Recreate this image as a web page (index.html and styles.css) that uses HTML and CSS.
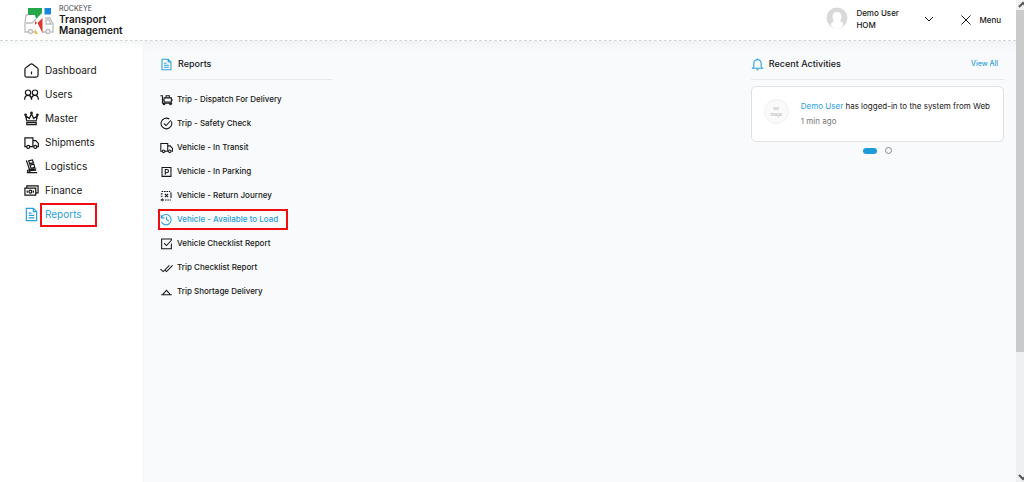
FILE: index.html
```html
<!DOCTYPE html>
<html lang="en">
<head>
<meta charset="utf-8">
<title>Rockeye Transport Management</title>
<meta name="viewport" content="width=device-width, initial-scale=1">
<link rel="stylesheet" href="styles.css">
</head>
<body>
<svg class="sprite" aria-hidden="true">
  <symbol id="truck" viewBox="0 0 16 16"><path d="M3 12.500H1V3h8.500v9.500H6M9.500 6h3L15.300 9v3.500H14M9.500 12.500h.5"/><circle cx="4.500" cy="12.700" r="1.600"/><circle cx="12" cy="12.700" r="1.600"/></symbol>
  <symbol id="report" viewBox="0 0 16 16"><path d="M2.500 1.500h7.500l3.500 3.500v9.500h-11zM10 1.500V5h3.500M5 6.500h3M5 9h6M5 11.500h6"/></symbol>
</svg>
<div class="app">
  <div class="page">
    <header class="header">
      <a class="brand" href="#">
        <svg class="brand-logo" viewBox="0 0 30 28" aria-hidden="true">
          <g fill="none" stroke="#bdbdbd" stroke-width="1.300"><path d="M4 8H2l-1 8v9h4M8 25h4M21 11h5l3 6v8h-2M18 25h4M2 16h6l4-4"/><circle cx="6.500" cy="24.500" r="2"/><circle cx="24" cy="24.500" r="2"/><path d="M22 13h3l2 4h-5z"/></g>
          <path fill="#24a64a" d="M4 1h14v5l-6 6-1-4H4z"/><path fill="#1787dc" d="M20.500 1h6.500v6.500h-6.500z"/><path fill="#de352c" d="M18.500 11v15l-5-10zM11 14l2 2-2 2z"/><path fill="#f2bd3a" d="M11 22l3 5h-3z"/>
        </svg>
        <span class="brand-text"><small>ROCKEYE</small><strong>Transport<br>Management</strong></span>
      </a>
      <div class="header-tools">
        <button class="user" type="button">
          <svg class="avatar" viewBox="0 0 22 22" aria-hidden="true"><circle cx="11" cy="11" r="10.500" fill="#d9d9d9"/><path fill="#fff" d="M11 5c3 0 4.500 2 4.500 4.500S14.500 13 14 14c2 1 3 2 3.500 4-2 2-4 4-6.500 4s-4.500-2-6.500-4c.500-2 1.500-3 3.500-4-.500-1-1.500-2-1.500-4.500S8 5 11 5z"/></svg>
          <span class="user-text">Demo User<br>HOM</span>
          <svg class="chevron" viewBox="0 0 10 6" aria-hidden="true"><path d="M1 1l4 4 4-4"/></svg>
        </button>
        <button class="menu" type="button"><svg class="close" viewBox="0 0 10 10" aria-hidden="true"><path d="M.5.5l9 9M9.500.5l-9 9"/></svg>Menu</button>
      </div>
    </header>
    <div class="body">
      <nav class="sidebar" aria-label="Main">
        <a href="#"><svg class="icon" viewBox="0 0 16 16"><path d="M1 6.500Q1 5.500 2 5l4.500-3.500Q8 .5 9.500 1.500L14 5q1 .5 1 1.500V13q0 2-2 2H3q-2 0-2-2zM8 9v3"/></svg><span>Dashboard</span></a>
        <a href="#"><svg class="icon" viewBox="0 0 16 16"><circle cx="4.300" cy="6" r="2.800"/><circle cx="11.700" cy="6" r="2.800"/><path d="M.7 13.500c0-3 1.500-4.500 3.600-4.500S8 10.500 8 13.500C8 10.500 9.500 9 11.700 9s3.600 1.500 3.600 4.500"/></svg><span>Users</span></a>
        <a href="#"><svg class="icon" viewBox="0 0 16 16"><path d="M3 10.500L1.700 5l4 3L8 3l2.300 5 4-3L13 10.500zM3 12.500h10v2H3z"/><circle cx="1.700" cy="4" r=".8"/><circle cx="8" cy="2" r=".8"/><circle cx="14.300" cy="4" r=".8"/></svg><span>Master</span></a>
        <a href="#"><svg class="icon"><use href="#truck"/></svg><span>Shipments</span></a>
        <a href="#"><svg class="icon" viewBox="0 0 16 16"><path d="M2.500 1.500l3.500 10 7-1M5 2l4-1 1 3-4 1zM6.500 6.500l4-1 1 3.500-4 1zM3 14.500h11M6 12.500l7-.500"/><circle cx="5" cy="12.800" r="1.300"/></svg><span>Logistics</span></a>
        <a href="#"><svg class="icon" viewBox="0 0 16 16"><path d="M1 5.500h11.500V13H1zM3 5.500V3h12v7.500h-2.500M3.500 8v2.500M10 8v2.500"/><circle cx="6.800" cy="9.200" r="1.500"/></svg><span>Finance</span></a>
        <a class="active" href="#" aria-current="page"><svg class="icon"><use href="#report"/></svg><span class="marked">Reports</span></a>
      </nav>
      <main class="main">
        <section class="reports">
          <h2 class="heading"><svg class="icon blue"><use href="#report"/></svg>Reports</h2>
          <ul class="report-list">
            <li><a href="#"><svg class="icon" viewBox="0 0 16 16"><path d="M.5 3.500h2.500v9h12M5 6h9v5H5zM7.500 6V3.500h4V6M3 8.500h2M14 8.500h2"/><circle cx="5" cy="13.500" r="1"/><circle cx="13" cy="13.500" r="1"/></svg>Trip - Dispatch For Delivery</a></li>
            <li><a href="#"><svg class="icon" viewBox="0 0 16 16"><path d="M14 5.500A6.600 6.600 0 1 1 11.500 2.500M4.800 8l2.700 2.500L13.500 4"/></svg>Trip - Safety Check</a></li>
            <li><a href="#"><svg class="icon"><use href="#truck"/></svg>Vehicle - In Transit</a></li>
            <li><a href="#"><svg class="icon" viewBox="0 0 16 16"><path d="M2.500 3h11v11h-11zM6.500 12V5.500h2q2 0 2 2t-2 2h-2"/></svg>Vehicle - In Parking</a></li>
            <li><a href="#"><svg class="icon" viewBox="0 0 16 16"><path stroke-dasharray="2 1" d="M2 3h10.500M3 13.500h10.500"/><path d="M3.500 12l-2 1.500 2 1.500M13.500 4v7M1 6h2M1 9h2M6 6l4 4M10 6l-4 4"/></svg>Vehicle - Return Journey</a></li>
            <li><a class="active marked" href="#"><svg class="icon" viewBox="0 0 16 16"><path d="M2 5a6.300 6.300 0 1 1-.200 6M1.500 2v4h4M8 4.500V8l3 2"/></svg>Vehicle - Available to Load</a></li>
            <li><a href="#"><svg class="icon" viewBox="0 0 16 16"><path d="M14 8v6.500H2v-12h12V4M5 7.500l3 3 6-6.500"/></svg>Vehicle Checklist Report</a></li>
            <li><a href="#"><svg class="icon" viewBox="0 0 16 16"><path d="M.5 10L4 13l7.500-7.500M6.500 11.500L8 13l7.500-7.500"/></svg>Trip Checklist Report</a></li>
            <li><a href="#"><svg class="icon" viewBox="0 0 16 16"><path d="M3.500 11.500L8 6.500l4.500 5M1.500 12h13"/></svg>Trip Shortage Delivery</a></li>
          </ul>
        </section>
        <section class="activities">
          <div class="activity-head">
            <h2 class="heading"><svg class="icon blue" viewBox="0 0 16 16"><path d="M2 12.500l1.500-2V6.500a4.500 4.500 0 0 1 9 0v4l1.500 2zM8 2V.5M6.500 14.500h3"/></svg>Recent Activities</h2>
            <a class="view-all" href="#">View All</a>
          </div>
          <article class="card">
            <span class="no-image">No<br>image</span>
            <div><p><a href="#">Demo User</a> has logged-in to the system from Web</p><time>1 min ago</time></div>
          </article>
          <div class="pager"><button class="current" type="button" aria-label="Page 1"></button><button type="button" aria-label="Page 2"></button></div>
        </section>
      </main>
    </div>
  </div>
  <div class="scrollbar" aria-hidden="true">
    <svg viewBox="0 0 8 10"><path d="M3 7l4-4 4 4"/></svg>
    <div class="track"><div class="thumb"></div></div>
    <svg viewBox="0 0 8 10"><path d="M3 3l4 4 4-4"/></svg>
  </div>
</div>
</body>
</html>
```
FILE: styles.css
```css
* { box-sizing: border-box; }
body { margin: 0; font-family: Inter, "Open Sans", sans-serif; font-size: 8px; font-weight: 500; line-height: 12px; color: #171717; background: #f8fafc; }
a { color: inherit; text-decoration: none; }
button { padding: 0; border: 0; background: none; font: inherit; color: inherit; text-align: left; }
svg { flex: none; fill: none; stroke: currentColor; }
h2, p, ul { margin: 0; padding: 0; }
ul { list-style: none; }
.sprite { position: absolute; width: 0; height: 0; }
.app { display: flex; min-height: 100vh; }
.page { flex: 1; display: flex; flex-direction: column; min-width: 0; }

.header { display: flex; justify-content: space-between; min-height: 41px; padding: 4px 15px 0 24px; background: #fff; border-bottom: 1px dashed #d4d6d8; }
.brand { display: flex; align-items: flex-start; gap: 5px; }
.brand-logo { width: 30px; height: 28px; margin-top: 3px; stroke: none; }
.brand-text small { display: block; font-size: 7px; line-height: 10px; font-weight: 400; color: #444; }
.brand-text strong { display: block; font-size: 10px; line-height: 11px; font-weight: 600; }
.header-tools { display: flex; align-items: flex-start; gap: 27px; }
.user { display: flex; align-items: flex-start; padding-top: 3px; }
.avatar { width: 22px; height: 22px; stroke: none; }
.user-text { width: 50px; margin-left: 8px; margin-right: 18px; white-space: nowrap; }
.chevron { width: 10px; height: 6px; margin-top: 9px; }
.menu { display: flex; align-items: center; gap: 8px; padding-top: 10px; }
.close { width: 10px; height: 10px; }

.body { display: flex; flex: 1; }
.sidebar { flex: 0 0 144px; padding: 17px 0 0 24px; background: #fff; box-shadow: inset 0 10px 10px -8px #f2f3f4; border-right: 1px solid #f3f5f7; font-size: 10px; font-weight: 400; }
.sidebar a { display: flex; align-items: center; gap: 6px; height: 24px; }
.sidebar .icon { width: 15px; height: 15px; }
.icon { width: 13px; height: 13px; stroke-width: 1.3; }
.active, .blue { color: #2ba0da; }
.marked { position: relative; }
.marked::after { content: ""; position: absolute; inset: -5px -15px -7px -5px; border: 2px solid #f00d12; pointer-events: none; }

.main { flex: 1; display: flex; justify-content: space-between; gap: 24px; padding: 14px 12px 0 16px; background: #f8fafc; box-shadow: inset 0 10px 10px -8px #eceef0; }
.reports { flex: 0 1 172px; }
.heading { display: flex; align-items: center; gap: 5px; font-size: 9px; line-height: 18px; font-weight: 500; }
.reports .heading, .activity-head { height: 25px; padding-bottom: 6px; border-bottom: 1px solid #e6e8ea; }
.report-list { padding-top: 7px; }
.report-list li { display: flex; align-items: center; height: 24px; }
.report-list a { display: flex; align-items: center; gap: 4px; white-space: nowrap; }
.report-list .marked::after { inset: -4px -10px -4px -2px; }
.activities { flex: 0 1 253px; }
.activity-head { display: flex; align-items: center; justify-content: space-between; padding-right: 6px; }
.view-all { font-size: 7px; color: #2ba0da; }
.card { display: flex; gap: 12px; min-height: 56px; margin-top: 6px; padding: 12px 13px 0 12px; background: #fff; border: 1px solid #dfe1e3; border-radius: 5px; font-weight: 400; }
.no-image { flex: none; width: 25px; height: 25px; padding-top: 6px; border: 1px solid #f0f0f0; border-radius: 50%; background: #fafafa; color: #aaa; font-size: 4px; line-height: 6px; text-align: center; }
.card p { line-height: 14px; white-space: nowrap; }
.card p a { color: #2ba0da; }
.card time { display: block; line-height: 16px; color: #777; }
.pager { display: flex; justify-content: center; align-items: center; gap: 8px; margin-top: 5px; }
.pager button { width: 7px; height: 7px; border: 1px solid #8b8b8b; border-radius: 50%; }
.pager .current { width: 14px; height: 6px; border: 0; border-radius: 3px; background: #1d9bd9; }

.scrollbar { flex: 0 0 8px; display: flex; flex-direction: column; background: #f0f0f0; }
.scrollbar svg { width: 8px; height: 10px; color: #555; stroke-width: 2; }
.track { flex: 1; }
.thumb { height: 74%; background: #cacaca; }
```
